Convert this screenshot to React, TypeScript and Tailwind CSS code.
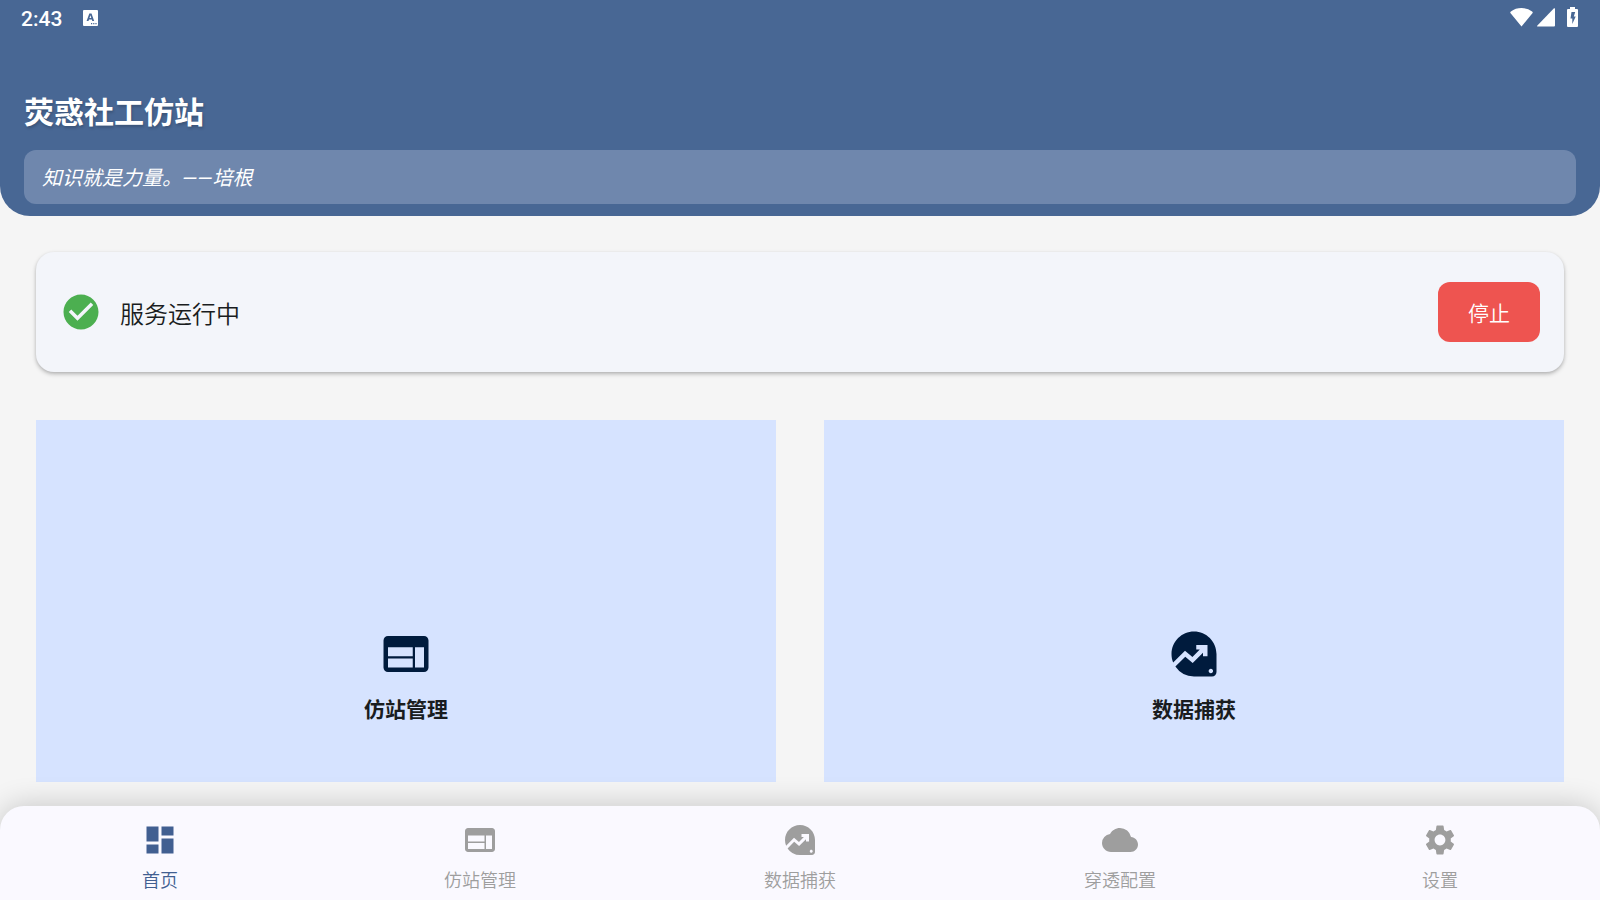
import type { IconType } from "react-icons";
import {
  MdCheckCircle,
  MdCloud,
  MdDashboard,
  MdDataExploration,
  MdSettings,
  MdWeb
} from "react-icons/md";

type Feature = {
  title: string;
  icon: IconType;
};

type NavItem = {
  label: string;
  icon: IconType;
  active?: boolean;
};

const FEATURES: Feature[] = [
  { title: "仿站管理", icon: MdWeb },
  { title: "数据捕获", icon: MdDataExploration }
];

const NAV_ITEMS: NavItem[] = [
  { label: "首页", icon: MdDashboard, active: true },
  { label: "仿站管理", icon: MdWeb },
  { label: "数据捕获", icon: MdDataExploration },
  { label: "穿透配置", icon: MdCloud },
  { label: "设置", icon: MdSettings }
];

function StatusBar() {
  return (
    <div className="flex h-9 items-center justify-between pr-[22px] pl-[21px] text-white">
      <div className="flex items-center gap-[21px]">
        <span className="pt-0.5 text-[21px] leading-6 font-medium">2:43</span>
        <svg viewBox="0 0 15 16" className="h-4 w-[15px]" aria-hidden="true">
          <rect width="15" height="16" rx="1" fill="#fff" />
          <path
            d="M6.3 3.5h2.2l2.7 7.5H9.3l-.5-1.5H6L5.5 11H3.6zM6.5 8h1.8l-.9-2.7z"
            fill="#486794"
            fillRule="evenodd"
          />
          <path d="M8 13h1.2v1.2H8zM10.2 13h1.2v1.2h-1.2zM12.4 13h1.2v1.2h-1.2z" fill="#486794" />
        </svg>
      </div>
      <div className="flex items-center gap-1 pb-0.5">
        <svg viewBox="0 0 23 20" className="h-5 w-[23px]" fill="currentColor" aria-hidden="true">
          <path d="M11.5 19.5 L0.6 6.2 Q-0.2 5.2 0.9 4.4 Q5.5 1 11.5 1 Q17.5 1 22.1 4.4 Q23.2 5.2 22.4 6.2 Z" />
        </svg>
        <svg viewBox="0 0 18 20" className="h-5 w-[18px]" fill="currentColor" aria-hidden="true">
          <path d="M17 1.3 Q18 .8 18 2 V18.5 Q18 19.5 17 19.5 H.8 Q-.4 19.5 .4 18.5 Z" />
        </svg>
        <svg viewBox="0 0 11 20" className="ml-2 h-5 w-[11px]" fill="currentColor" aria-hidden="true">
          <path
            d="M3 0h5v2h2q1 0 1 1v16q0 1-1 1H1q-1 0-1-1V3q0-1 1-1h2zM4.5 5L3.5 11.5H5.3V17L8.7 9.5H6.8L8.2 5z"
            fillRule="evenodd"
          />
        </svg>
      </div>
    </div>
  );
}

function Header() {
  return (
    <header className="rounded-b-[30px] bg-[#486794] pb-3">
      <StatusBar />
      <div className="px-6 pt-[57px]">
        <h1 className="text-[30px] leading-10 font-bold text-white [text-shadow:1px_2px_3px_rgba(0,0,0,0.2)]">
          荧惑社工仿站
        </h1>
        <p className="mt-[17px] rounded-xl bg-[#6f87ad] px-[18px] pt-[13px] pb-[11px] text-[20px] leading-[30px] text-white italic">
          知识就是力量。——培根
        </p>
      </div>
    </header>
  );
}

function ServiceCard() {
  return (
    <section className="flex items-center justify-between rounded-[18px] bg-[#f3f5fa] px-6 py-[30px] shadow-[0_2px_4px_rgba(0,0,0,0.25),0_1px_3px_rgba(0,0,0,0.06)]">
      <div className="flex items-center gap-[18px]">
        <MdCheckCircle className="size-[42px] text-[#4caf50]" />
        <span className="pt-1.5 text-[24px] leading-9 font-[350] text-[#191c20]">服务运行中</span>
      </div>
      <button
        type="button"
        className="rounded-xl bg-[#ee5450] px-[30px] pt-[17px] pb-[13px] text-[21px] leading-[30px] font-[350] text-white"
      >
        停止
      </button>
    </section>
  );
}

function FeatureTile({ feature }: { feature: Feature }) {
  const Icon = feature.icon;

  return (
    <button
      type="button"
      className="flex aspect-[13/9] flex-col items-center justify-center gap-3.5 bg-[#d6e3ff] text-[#001b3d]"
    >
      <Icon className="size-[54px]" />
      <span className="text-[21px] leading-[30px] font-bold text-[#191c20]">{feature.title}</span>
    </button>
  );
}

function BottomNav() {
  return (
    <nav className="grid grid-cols-5 rounded-t-3xl bg-[#faf9ff] pt-4 pb-[7px] shadow-[0_0_30px_rgba(0,0,0,0.2)]">
      {NAV_ITEMS.map((item) => {
        const Icon = item.icon;

        return (
          <a
            key={item.label}
            href="#"
            aria-current={item.active ? "page" : undefined}
            className={`flex flex-col items-center gap-[11px] ${item.active ? "text-[#415f91]" : "text-[#9e9e9e]"}`}
          >
            <Icon className="size-9" />
            <span className="text-[18px] leading-6 font-[350]">{item.label}</span>
          </a>
        );
      })}
    </nav>
  );
}

export default function App() {
  return (
    <div className="flex h-screen flex-col overflow-hidden bg-[#f5f5f5] font-[Roboto,'Noto_Sans_CJK_SC',sans-serif]">
      <Header />
      <main className="flex min-h-0 flex-1 flex-col gap-12 px-9 pt-9 pb-6">
        <ServiceCard />
        <div className="grid min-h-0 flex-1 grid-cols-2 items-start gap-12 overflow-hidden">
          {FEATURES.map((feature) => (
            <FeatureTile key={feature.title} feature={feature} />
          ))}
        </div>
      </main>
      <BottomNav />
    </div>
  );
}
